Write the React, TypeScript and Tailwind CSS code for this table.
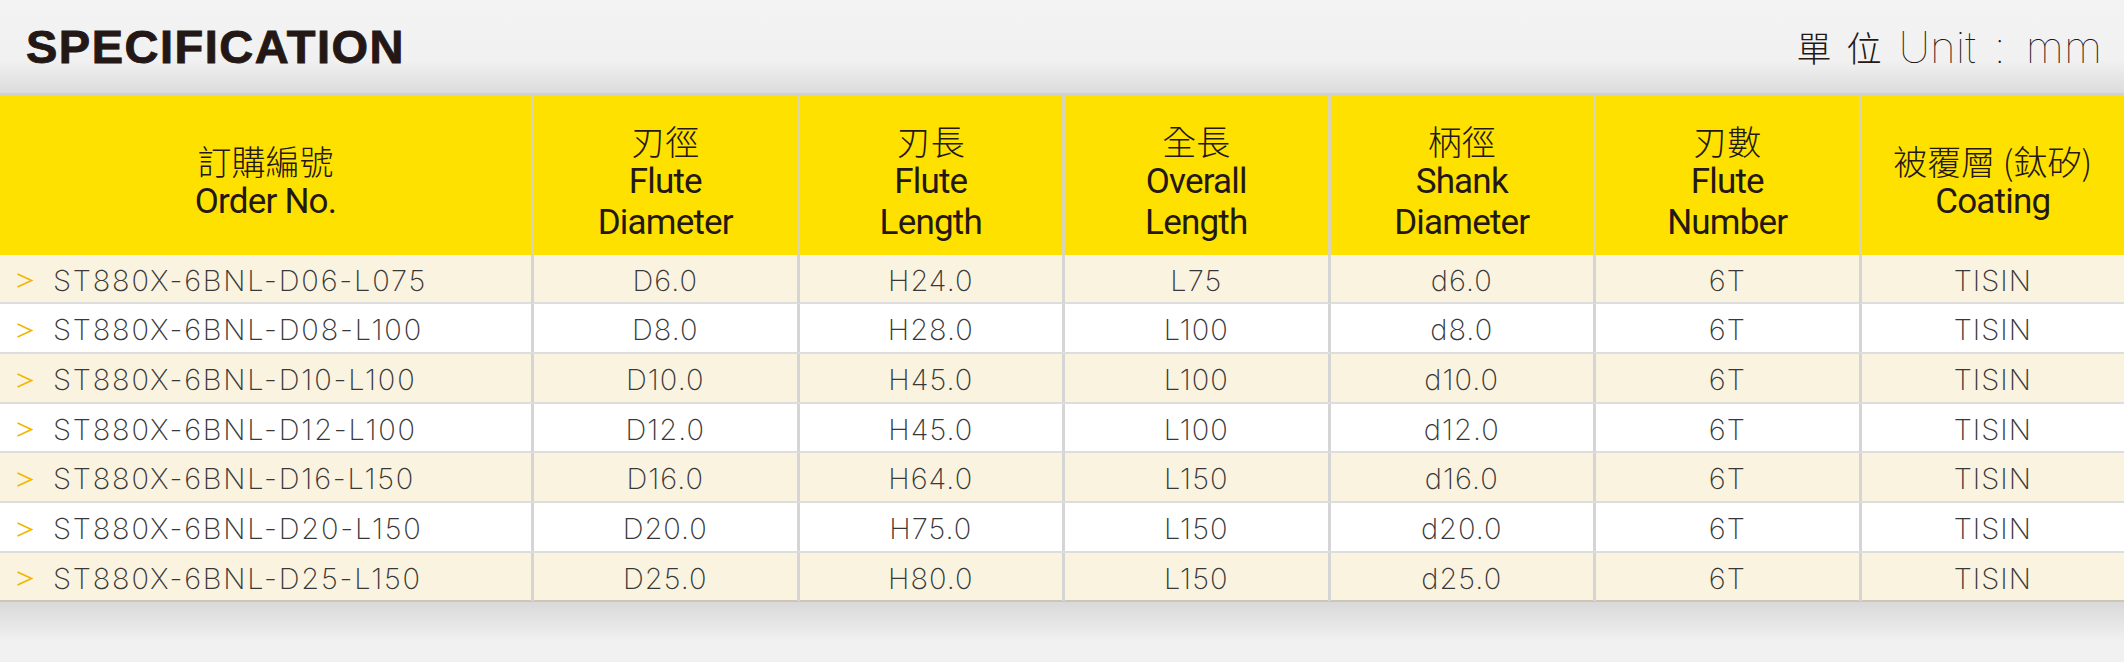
import React from 'react';

type Row = {
  code: string;
  dia: string;
  flute: string;
  overall: string;
  shank: string;
  num: string;
  coat: string;
};

const rows: Row[] = [
  { code: 'ST880X-6BNL-D06-L075', dia: 'D6.0', flute: 'H24.0', overall: 'L75', shank: 'd6.0', num: '6T', coat: 'TISIN' },
  { code: 'ST880X-6BNL-D08-L100', dia: 'D8.0', flute: 'H28.0', overall: 'L100', shank: 'd8.0', num: '6T', coat: 'TISIN' },
  { code: 'ST880X-6BNL-D10-L100', dia: 'D10.0', flute: 'H45.0', overall: 'L100', shank: 'd10.0', num: '6T', coat: 'TISIN' },
  { code: 'ST880X-6BNL-D12-L100', dia: 'D12.0', flute: 'H45.0', overall: 'L100', shank: 'd12.0', num: '6T', coat: 'TISIN' },
  { code: 'ST880X-6BNL-D16-L150', dia: 'D16.0', flute: 'H64.0', overall: 'L150', shank: 'd16.0', num: '6T', coat: 'TISIN' },
  { code: 'ST880X-6BNL-D20-L150', dia: 'D20.0', flute: 'H75.0', overall: 'L150', shank: 'd20.0', num: '6T', coat: 'TISIN' },
  { code: 'ST880X-6BNL-D25-L150', dia: 'D25.0', flute: 'H80.0', overall: 'L150', shank: 'd25.0', num: '6T', coat: 'TISIN' },
];

// heights of the body rows, they alternate 49/50 to land on the picture's lines
const rowHeights = ['h-[49px]', 'h-[50px]', 'h-[50px]', 'h-[49px]', 'h-[50px]', 'h-[50px]', 'h-[49px]'];

const headers = [
  { zh: '刃徑', en: ['Flute', 'Diameter'] },
  { zh: '刃長', en: ['Flute', 'Length'] },
  { zh: '全長', en: ['Overall', 'Length'] },
  { zh: '柄徑', en: ['Shank', 'Diameter'] },
  { zh: '刃數', en: ['Flute', 'Number'] },
  { zh: '被覆層 (鈦矽)', en: ['Coating'] },
];

const zhFont = "font-['Noto_Sans_CJK_TC','Noto_Sans_CJK_SC',sans-serif]";
const enFont = "font-['Roboto','Liberation_Sans',sans-serif]";
const thinFont = "font-['Inter','Noto_Sans_CJK_TC',sans-serif]";

function HeaderCell({ zh, en, first }: { zh: string; en: string[]; first?: boolean }) {
  return (
    <div
      className={`flex flex-col items-center justify-center pt-[12px] bg-[#ffe100] text-[#231815] ${
        first ? '' : 'border-l-[3px] border-[#d9d3b8]'
      }`}
    >
      <div className={`${zhFont} font-light text-[34px] leading-[41px]`}>{zh}</div>
      {en.map((line, i) => (
        <div key={i} className={`${enFont} text-[35px] leading-[41px] tracking-[-0.8px]`}>
          {line}
        </div>
      ))}
    </div>
  );
}

function Chevron() {
  return (
    <svg width="17" height="15" viewBox="0 0 17 15" className="shrink-0">
      <polyline points="1.5,1 15.5,7.5 1.5,14" fill="none" stroke="#f1b600" strokeWidth="1.7" />
    </svg>
  );
}

function DataCell({ children }: { children: React.ReactNode }) {
  return (
    <div className="flex items-center justify-center pt-[4px] border-l-[3px] border-[#d5d5d5]">
      <span className={`${thinFont} font-extralight text-[29px] tracking-[1px] text-[#383838]`}>{children}</span>
    </div>
  );
}

export default function App() {
  return (
    <div className="w-[2124px] h-[662px] bg-[#f1f1f1] overflow-hidden flex flex-col">
      {/* title bar */}
      <div className="h-[95px] shrink-0 flex items-center justify-between pl-[26px] pr-[22px] bg-linear-to-b from-[#f3f3f3] via-[#f1f1f1] via-65% to-[#dcdcdc] border-b-2 border-[#d0d0d0]">
        <h1 className="font-['Liberation_Sans',sans-serif] font-bold text-[47px] leading-none tracking-[1.5px] text-[#231815] [-webkit-text-stroke:0.9px_#231815]">
          SPECIFICATION
        </h1>
        <div className="flex items-center text-[#231815]">
          <span className={`${zhFont} font-light text-[35px] leading-none`}>單</span>
          <span className={`${zhFont} font-light text-[35px] leading-none ml-[15px]`}>位</span>
          <span className={`${thinFont} font-thin text-[44px] leading-none ml-[17px]`}>Unit</span>
          <span className={`${thinFont} font-thin text-[44px] leading-none ml-[18px]`}>:</span>
          <span className={`${thinFont} font-thin text-[44px] leading-none ml-[20px]`}>mm</span>
        </div>
      </div>

      {/* table */}
      <div className="grid grid-cols-[2fr_1fr_1fr_1fr_1fr_1fr_1fr]">
        <div className="col-span-7 grid grid-cols-subgrid h-[160px]">
          <HeaderCell zh="訂購編號" en={['Order No.']} first />
          {headers.map((h) => (
            <HeaderCell key={h.zh} zh={h.zh} en={h.en} />
          ))}
        </div>

        {rows.map((r, i) => (
          <div
            key={r.code}
            className={`col-span-7 grid grid-cols-subgrid border-b-2 ${rowHeights[i]} ${
              i % 2 === 0 ? 'bg-[#faf3e0]' : 'bg-white'
            } ${i === rows.length - 1 ? 'border-[#cbc6b8]' : 'border-[#dddddd]'}`}
          >
            <div className="flex items-center pl-[16px] pt-[4px]">
              <Chevron />
              <span className={`${thinFont} font-extralight text-[29px] tracking-[1.8px] text-[#383838] ml-[20px]`}>
                {r.code}
              </span>
            </div>
            <DataCell>{r.dia}</DataCell>
            <DataCell>{r.flute}</DataCell>
            <DataCell>{r.overall}</DataCell>
            <DataCell>{r.shank}</DataCell>
            <DataCell>{r.num}</DataCell>
            <DataCell>{r.coat}</DataCell>
          </div>
        ))}
      </div>

      {/* shadow under the table */}
      <div className="h-[40px] shrink-0 bg-linear-to-b from-[#d9d9d9] to-[#f1f1f1]" />
      <div className="flex-1" />
    </div>
  );
}
